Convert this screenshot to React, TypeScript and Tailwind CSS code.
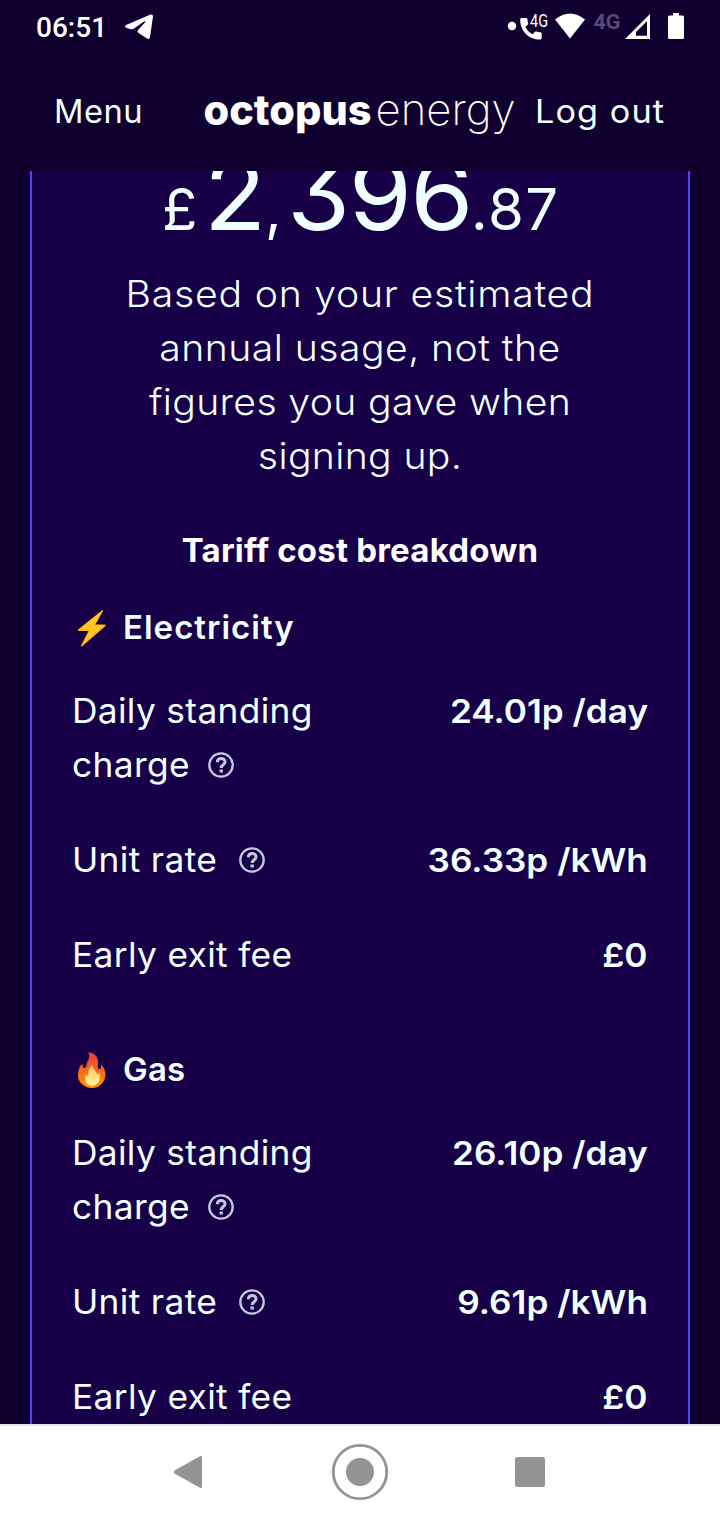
import type { ReactNode } from "react";
import { clsx } from "clsx";

function StatusBar() {
  return (
    <div className="flex h-[54px] items-center justify-between pr-[35px] pl-9 text-white">
      <div className="flex items-center">
        <span className="mt-0.5 w-[70px] font-['Roboto'] text-[28px] leading-none font-medium whitespace-nowrap">
          06:51
        </span>
        <svg className="ml-[18px] h-[28px] w-[31px]" viewBox="0 0 31 28" fill="currentColor">
          <path d="M2 12 26 1.800Q29 .7 29 3.500L26 24Q25.500 26.800 23 25.500L14.500 20Q12.500 18.500 14 17L21 9.500Q22 7.500 20 8.500L10 15.500Q8.500 16.500 6 15.900L1.500 14.500Q.3 13.200 2 12Z" />
        </svg>
      </div>
      <svg className="h-[54px] w-[178px]" viewBox="507 0 178 54" fill="currentColor">
        <circle cx="512" cy="26" r="4.200" />
        <path d="M521.500 18h4.500c.8 0 1.300.5 1.400 1.300.1 1.500.4 2.600.7 4 .1.600 0 1-.4 1.400l-2.300 2.300c1.800 3.500 3.700 5.400 7.200 7.200l2.200-2.300c.4-.4.900-.5 1.400-.4 1.400.5 2.500.7 4.200.8.800 0 1.300.6 1.300 1.300v4.500c0 .9-.6 1.400-1.400 1.400-11.700 0-20.100-8.600-20.100-20.100 0-.8.500-1.400 1.300-1.400Z" />
        <text x="530" y="26.500" textLength="18" lengthAdjust="spacingAndGlyphs" className="font-['Roboto'] text-[17.500px]">
          4G
        </text>
        <path d="M570 38.500 555 19.500Q570 7.500 585 19.500Z" />
        <text x="593.500" y="28.500" textLength="27" lengthAdjust="spacingAndGlyphs" fill="#584a70" className="font-['Roboto'] text-[21px] font-bold">
          4G
        </text>
        <path fillRule="evenodd" d="M625 39 650 14V39ZM636 35.800H647V21L636 32Z" />
        <path d="M673 13h6v2.500h3.500q1.500 0 1.500 1.500v20.500q0 1.500-1.500 1.500h-13q-1.500 0-1.500-1.500V17q0-1.500 1.500-1.500h3.500Z" />
      </svg>
    </div>
  );
}

function Logo() {
  return (
    <svg className="h-[60px] w-[320px] shrink-0" viewBox="200 80 320 60" fill="#fff">
      <text x="203.500" y="124" textLength="168" lengthAdjust="spacingAndGlyphs" className="font-['Inter'] text-[42px] font-extrabold">
        octopus
      </text>
      <text x="375.500" y="123.500" textLength="140" lengthAdjust="spacingAndGlyphs" className="font-['Inter'] text-[43px] font-extralight">
        energy
      </text>
    </svg>
  );
}

function Header() {
  return (
    <header className="flex h-[117px] pt-[27px] text-[32px] text-[#f0ffff]">
      <span className="mt-px ml-[54px] w-[146px] origin-left scale-x-[1.02] leading-[60px] tracking-[0.5px] whitespace-nowrap">
        Menu
      </span>
      <Logo />
      <span className="mt-px ml-[15px] origin-left scale-x-[1.07] leading-[60px] tracking-[1px] whitespace-nowrap">
        Log out
      </span>
    </header>
  );
}

function Bolt() {
  return (
    <svg className="mt-0.5 h-[38px] w-[30px]" viewBox="0 0 30 38">
      <path d="M25.500 1 1 20.500Q.6 21.800 2 22H11.500L4 36.500Q3.800 38 5.500 37L28.500 17Q29 15.600 27.500 15.500H18.500L26 2Q26.500.6 25.500 1Z" fill="#feb804" />
      <path d="M24.500 2.500 3 20.500 14 19.500 6.500 34 27 16.500 16.500 17Z" fill="#ffca28" />
    </svg>
  );
}

function Flame() {
  return (
    <svg className="mt-0.5 h-[38px] w-[30px]" viewBox="0 0 30 38">
      <defs>
        <linearGradient id="outer" x1="0" y1="0" x2="0" y2="1">
          <stop offset="0" stopColor="#e93a3e" />
          <stop offset=".5" stopColor="#f9651f" />
          <stop offset="1" stopColor="#ff9800" />
        </linearGradient>
        <linearGradient id="inner" x1="0" y1="0" x2="0" y2="1">
          <stop offset="0" stopColor="#ffc95a" />
          <stop offset="1" stopColor="#fff59d" />
        </linearGradient>
      </defs>
      <path d="M11 1.500C17 1 22 6 21 13c-.3 2.500-.3 5 1.300 5.200 1.700 0 1.800-2.700 1.900-4.700C27 16 28.500 20 28.500 23.500 28.500 31 22.500 37 15 37S1 31.500 1 24C1 19.500 2.500 15 5.500 12.500c0 2 .2 4.500 2 4.500 2.500-.5 1.500-4 3.500-7.500 1.700-3 2-6-0-8Z" fill="url(#outer)" />
      <path d="M16 14c-.5 3.500 1.500 5 3 7 .8 1 .8 2.500 1.800 2.500 1 0 .9-1.300.9-2.200 1.300 2 1.800 4.200 1 7.200-1 4-4 6.200-7.700 6.200-4.500 0-7-3.200-6.800-7.200 0-1.800.3-3.200 1-4.500.3 1 .7 2 1.500 2 1.300-.3.300-2.500.8-5 .6-2.800 2.200-4.700 4.500-6Z" fill="url(#inner)" />
    </svg>
  );
}

function HelpIcon({ className }: { className: string }) {
  return (
    <svg className={clsx("h-[28px] w-[28px]", className)} viewBox="0 0 28 28" fill="none" stroke="#c2c9dc">
      <circle cx="14" cy="14" r="11.700" strokeWidth="2.300" />
      <path d="M10.300 11.300C10.500 6.300 18.200 6.500 18 11 18 13.800 14.200 13.800 14.200 17" strokeWidth="3" />
      <path d="M14.200 18.500v3" strokeWidth="3.400" />
    </svg>
  );
}

function Label({ children }: { children: ReactNode }) {
  return <span className="block origin-left scale-x-[1.04] tracking-[0.3px]">{children}</span>;
}

function FuelHeading({ icon, children }: { icon: ReactNode; children: ReactNode }) {
  return (
    <h3 className="flex h-[54px] items-center pl-1 text-[33px] leading-[54px] font-semibold">
      {icon}
      <span className="ml-4">{children}</span>
    </h3>
  );
}

type Rate = { value: string; unit?: string };

function RateValue({ value, unit }: Rate) {
  return (
    <dd className="origin-right scale-x-[1.065] text-[33px] font-semibold whitespace-nowrap">
      {value}
      {unit && ` /${unit}`}
    </dd>
  );
}

function Fuel({ standing, unitRate }: { standing: Rate; unitRate: Rate }) {
  return (
    <dl className="-mx-px mt-[30px] grid gap-[41px] text-[34px] leading-[54px] tracking-normal">
      <div className="flex justify-between">
        <dt>
          <Label>Daily standing</Label>
          <span className="flex items-center">
            <Label>charge</Label>
            <HelpIcon className="ml-[22px]" />
          </span>
        </dt>
        <RateValue {...standing} />
      </div>
      <div className="flex justify-between">
        <dt className="flex items-center">
          <Label>Unit rate</Label>
          <HelpIcon className="ml-[26px]" />
        </dt>
        <RateValue {...unitRate} />
      </div>
      <div className="flex justify-between">
        <dt>
          <Label>Early exit fee</Label>
        </dt>
        <RateValue value="£0" />
      </div>
    </dl>
  );
}

function NavBar() {
  return (
    <nav className="flex h-24 items-start justify-center border-t-2 border-[#e2e2e2] bg-white pt-3.5 text-[#949494]">
      <svg className="h-16 w-[400px]" viewBox="160 1440 400 64" fill="currentColor">
        <path d="M174.500 1470.500 200 1456.300Q202 1455.500 202 1457.500V1486.500Q202 1488.500 200 1487.700L174.500 1473.500Q173.300 1472 174.500 1470.500Z" />
        <circle cx="360" cy="1472" r="26.700" fill="none" stroke="currentColor" strokeWidth="2.800" />
        <circle cx="360" cy="1472" r="14" />
        <rect x="515" y="1457" width="30" height="30" rx="2.500" />
      </svg>
    </nav>
  );
}

export default function App() {
  return (
    <div className="flex h-[1520px] w-[720px] flex-col overflow-hidden bg-[#100030] font-['Inter',sans-serif]">
      <StatusBar />
      <Header />
      <main className="mx-[30px] h-[1253px] overflow-hidden border-x-2 border-[#5840ff] bg-[#180048] px-[41px] text-[#f0ffff]">
        <div className="-mt-[45px] flex h-[141px] items-baseline pl-[89px] text-[58px] leading-[137px] whitespace-nowrap [font-feature-settings:'cv09']">
          <span className="w-[42px]">£</span>
          <span className="w-[61px] origin-left scale-x-[1.04] text-[98px]">2</span>
          <span className="w-[22px]">,</span>
          <span className="w-[184px] origin-left scale-x-[1.04] text-[98px] tracking-[-1.500px]">396</span>
          <span className="tracking-[1.500px]">.87</span>
        </div>
        <p className="text-center text-[37px] leading-[54px] font-light">
          <span className="block scale-x-[1.06] tracking-[0.7px]">Based on your estimated</span>
          <span className="block scale-x-[1.06] tracking-[0.4px]">annual usage, not the</span>
          <span className="block scale-x-[1.06] tracking-[0.3px]">figures you gave when</span>
          <span className="block scale-x-[1.06] tracking-[0.3px]">signing up.</span>
        </p>
        <h2 className="mt-[40px] text-center text-[33px] leading-[54px] font-bold tracking-[0.2px] text-white">
          Tariff cost breakdown
        </h2>
        <div className="mt-[23px] tracking-[1px]">
          <FuelHeading icon={<Bolt />}>Electricity</FuelHeading>
          <Fuel standing={{ value: "24.01p", unit: "day" }} unitRate={{ value: "36.33p", unit: "kWh" }} />
        </div>
        <div className="mt-[60px] tracking-[0.2px]">
          <FuelHeading icon={<Flame />}>Gas</FuelHeading>
          <Fuel standing={{ value: "26.10p", unit: "day" }} unitRate={{ value: "9.61p", unit: "kWh" }} />
        </div>
      </main>
      <NavBar />
    </div>
  );
}
